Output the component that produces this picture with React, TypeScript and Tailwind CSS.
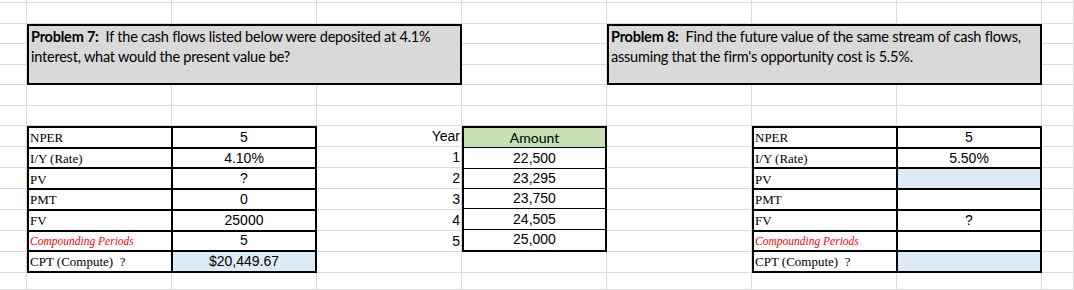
import React from "react"

const sheetCols = "grid-cols-[27px_145px_145px_145px_145px_145px_145px_145px_1fr]"
const sheetRows = "grid-rows-[3px_21px_20px_21px_20px_21px_20px_21px_21px_21px_21px_21px_21px_21px_17px]"

const serif = "font-['Liberation_Serif','Times_New_Roman',serif]"
const arial = "font-['Liberation_Sans',Arial,sans-serif]"
const calibri = "font-['Lato','Open_Sans',sans-serif]"

type Row = { label: string; value: string; fill?: boolean; red?: boolean }

const leftRows: Row[] = [
    { label: "NPER", value: "5" },
    { label: "I/Y (Rate)", value: "4.10%" },
    { label: "PV", value: "?" },
    { label: "PMT", value: "0" },
    { label: "FV", value: "25000" },
    { label: "Compounding Periods", value: "5", red: true },
    { label: "CPT (Compute)  ?", value: "$20,449.67", fill: true },
]

const rightRows: Row[] = [
    { label: "NPER", value: "5" },
    { label: "I/Y (Rate)", value: "5.50%" },
    { label: "PV", value: "", fill: true },
    { label: "PMT", value: "" },
    { label: "FV", value: "?" },
    { label: "Compounding Periods", value: "", red: true },
    { label: "CPT (Compute)  ?", value: "", fill: true },
]

const cashFlows = ["22,500", "23,295", "23,750", "24,505", "25,000"]

function TvmTable({ rows, className }: { rows: Row[]; className: string }) {
    return (
        <div className={`${className} grid grid-cols-2 grid-rows-7 border-t-2 border-l-2 border-black bg-white`}>
            {rows.map((r, i) => (
                <React.Fragment key={i}>
                    <div className={`flex items-center pl-[1px] pt-[1px] border-r-2 border-b-2 border-black whitespace-pre ${serif} ${r.red ? "text-[11.5px] italic text-[#ff0000]" : "text-[13px] text-black"}`}>
                        {r.label}
                    </div>
                    <div className={`flex items-center justify-center border-r-2 border-b-2 border-black text-[14px] text-black ${arial} ${r.fill ? "bg-[#ddebf7]" : ""}`}>
                        {r.value}
                    </div>
                </React.Fragment>
            ))}
        </div>
    )
}

function ProblemBox({ num, text, className }: { num: number; text: string; className: string }) {
    return (
        <div className={`${className} border-2 border-black bg-[#d9d9d9] px-[2px] pt-[1px] text-[14.5px] leading-[20px] tracking-[-0.22px] text-black ${calibri}`}>
            <span className="font-bold">Problem {num}:</span>&nbsp; {text}
        </div>
    )
}

export default function App() {
    return (
        <div className="grid w-[1074px] h-[290px] overflow-hidden bg-white">
            {/* gridlines layer */}
            <div className={`col-start-1 row-start-1 grid ${sheetCols} ${sheetRows}`}>
                {Array.from({ length: 15 * 9 }).map((_, i) => (
                    <div key={i} className="border-r border-b border-[#dadada]" />
                ))}
            </div>

            {/* content layer */}
            <div className={`col-start-1 row-start-1 grid ${sheetCols} ${sheetRows}`}>
                <ProblemBox
                    num={7}
                    className="col-start-2 col-end-5 row-start-3 row-end-6"
                    text="If the cash flows listed below were deposited at 4.1% interest, what would the present value be?"
                />
                <ProblemBox
                    num={8}
                    className="col-start-6 col-end-9 row-start-3 row-end-6"
                    text="Find the future value of the same stream of cash flows, assuming that the firm's opportunity cost is 5.5%."
                />

                <TvmTable rows={leftRows} className="col-start-2 col-end-4 row-start-8 row-end-15" />

                <div className={`col-start-4 col-end-5 row-start-8 row-end-14 grid grid-rows-6 text-[14px] text-black ${arial}`}>
                    {["Year", "1", "2", "3", "4", "5"].map(y => (
                        <div key={y} className="flex items-center justify-end pr-[2px]">{y}</div>
                    ))}
                </div>

                <div className="col-start-5 col-end-6 row-start-8 row-end-14 grid grid-rows-6 border-2 border-black bg-white text-[14px] text-black">
                    <div className={`flex items-center justify-center bg-[#c6e0b4] border-b-[1.5px] border-black ${calibri}`}>Amount</div>
                    {cashFlows.map((c, i) => (
                        <div key={c} className={`flex items-center justify-center ${arial} ${i < cashFlows.length - 1 ? "border-b border-black" : ""}`}>{c}</div>
                    ))}
                </div>

                <TvmTable rows={rightRows} className="col-start-7 col-end-9 row-start-8 row-end-15" />
            </div>
        </div>
    )
}
